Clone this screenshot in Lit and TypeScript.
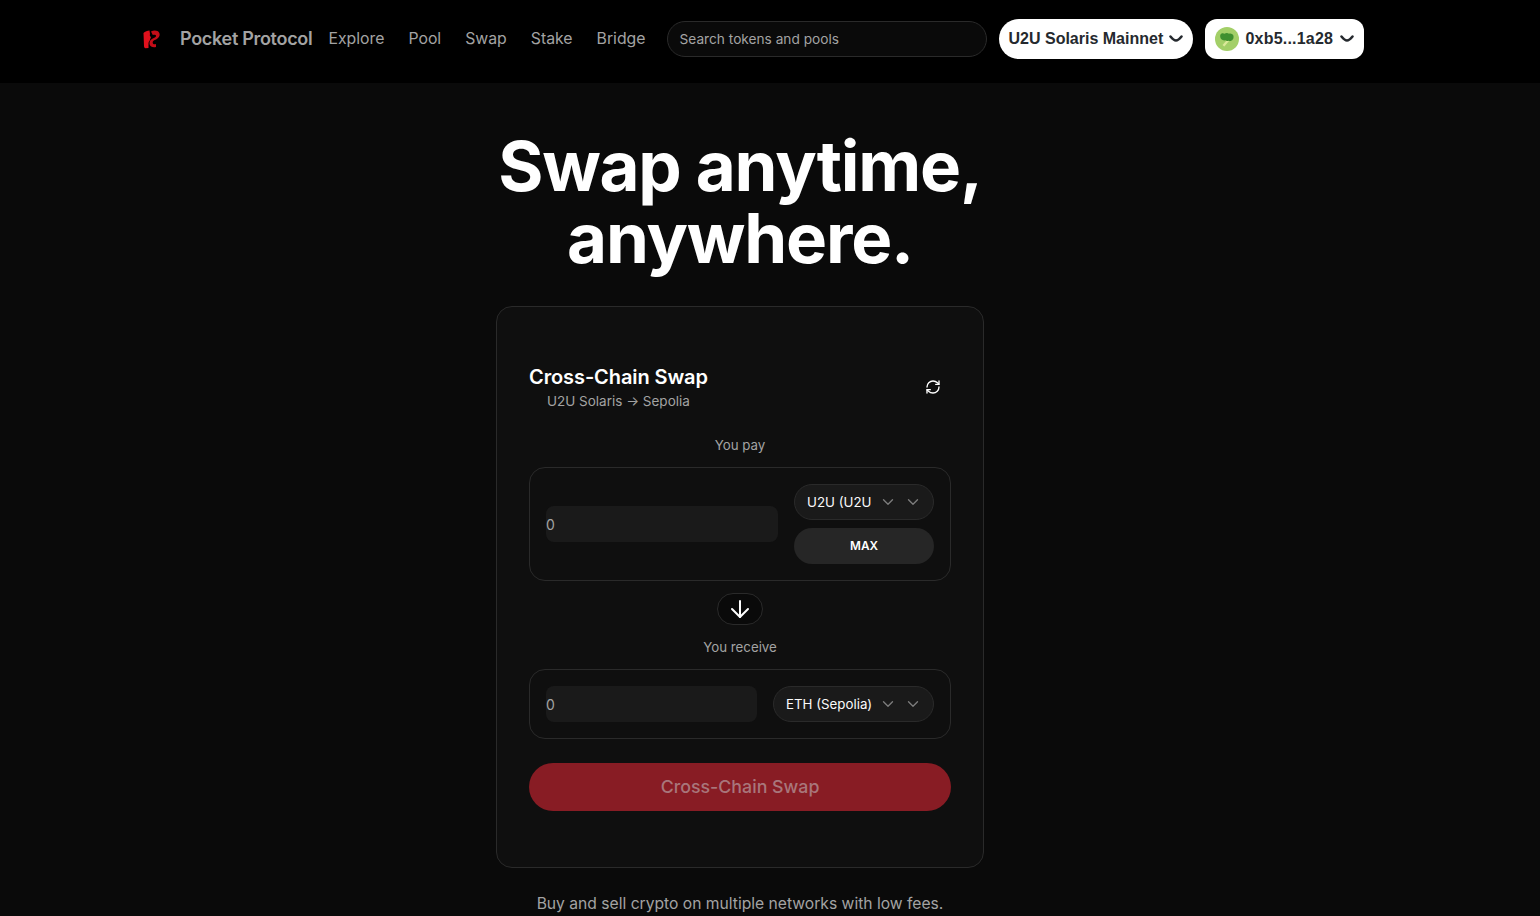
import { LitElement, html, css, svg } from 'lit';
import { customElement } from 'lit/decorators.js';

const chevron = svg`<path d="M6 9l6 6 6-6" fill="none" stroke="currentColor" stroke-width="1.800" stroke-linecap="round" stroke-linejoin="round"/>`;

@customElement('app-root')
export class AppRoot extends LitElement {
  static styles = css`
    :host {
      display: block;
      height: 916px;
      overflow: hidden;
      background: #0a0a0a;
      color: #fff;
      font-family: Inter, "Liberation Sans", sans-serif;
    }
    header {
      height: 83px;
      background: #000;
      display: flex;
      align-items: center;
      padding: 0 0 5px 142px;
      box-sizing: border-box;
    }
    .logo { width: 20px; height: 20px; display: block; }
    .brand {
      margin-left: 18px;
      font-size: 18px;
      line-height: 22px;
      font-weight: 600;
      letter-spacing: -0.3px;
      color: #a3a3a3;
      white-space: nowrap;
    }
    nav { display: flex; gap: 24px; margin: 0 0 1px 16px; }
    nav a { font-size: 15.8px; line-height: 20px; color: #a3a3a3; }
    .search {
      width: 320px;
      height: 36px;
      box-sizing: border-box;
      margin-left: 21px;
      padding-left: 12px;
      border: 1px solid #2a2a2a;
      border-radius: 18px;
      background: #0a0a0a;
      color: #a3a3a3;
      font-size: 13.7px;
      display: flex;
      align-items: center;
    }
    .rk {
      height: 40px;
      box-sizing: border-box;
      background: #fff;
      border-radius: 20px;
      color: #25292e;
      font-family: "Liberation Sans", Arial, sans-serif;
      font-size: 16px;
      font-weight: 700;
      display: flex;
      align-items: center;
      white-space: nowrap;
    }
    .rk svg { width: 14px; height: 8px; display: block; }
    .net { width: 194px; margin-left: 12px; padding-left: 10px; gap: 6px; }
    .acct { width: 159px; margin-left: 12px; padding-left: 10px; border-radius: 12px; gap: 7px; }
    .addr { letter-spacing: 0.2px; }
    .rk .avatar { width: 24px; height: 24px; }
    main {
      display: flex;
      flex-direction: column;
      align-items: center;
      padding-right: 60px;
    }
    h1 {
      margin: 47px 0 32px;
      font-size: 69px;
      line-height: 72px;
      font-weight: 700;
      letter-spacing: -1.200px;
      text-align: center;
    }
    .card {
      width: 488px;
      height: 562px;
      box-sizing: border-box;
      border: 1px solid #2a2a2a;
      border-radius: 16px;
      background: #0f0f0f;
      padding: 56px 32px 0;
    }
    .top { display: flex; align-items: center; justify-content: space-between; }
    .titles { text-align: center; }
    .title { font-size: 20px; line-height: 28px; font-weight: 600; letter-spacing: -0.1px; }
    .sub { font-size: 13.5px; line-height: 20px; color: #a3a3a3; }
    .refresh { width: 16px; height: 16px; margin-right: 10px; display: block; }
    .label { font-size: 13.300px; line-height: 20px; color: #a3a3a3; text-align: center; }
    .pay { margin-top: 24px; }
    .box {
      margin-top: 12px;
      border: 1px solid #2a2a2a;
      border-radius: 16px;
      padding: 16px;
      display: flex;
      align-items: center;
      gap: 16px;
    }
    .amount {
      flex: 1;
      height: 36px;
      border-radius: 8px;
      background: #1a1a1a;
      color: #a3a3a3;
      font-size: 14px;
      line-height: 37px;
    }
    .side { width: 140px; display: flex; flex-direction: column; gap: 8px; }
    .select {
      height: 36px;
      box-sizing: border-box;
      border: 1px solid #2a2a2a;
      border-radius: 18px;
      background: #1a1a1a;
      font-size: 13.300px;
      color: #fafafa;
      display: flex;
      align-items: center;
      padding: 0 11px 0 12px;
      white-space: nowrap;
    }
    .select span { flex: 1; }
    .select svg { width: 18px; height: 18px; color: #7c7c7c; display: block; }
    .select svg + svg { margin-left: 7px; }
    .wide { width: 161px; }
    .max {
      height: 36px;
      border-radius: 18px;
      background: #262626;
      font-size: 11.800px;
      font-weight: 600;
      display: flex;
      align-items: center;
      justify-content: center;
    }
    .flip {
      width: 46px;
      height: 32px;
      box-sizing: border-box;
      margin: 12px auto 0;
      border: 1px solid #2a2a2a;
      border-radius: 16px;
      background: #0a0a0a;
      display: flex;
      align-items: center;
      justify-content: center;
    }
    .flip svg { width: 24px; height: 24px; display: block; }
    .receive { margin-top: 12px; }
    .go {
      margin-top: 24px;
      height: 48px;
      box-sizing: border-box;
      padding-bottom: 1px;
      border-radius: 24px;
      background: #881c24;
      color: #a8767b;
      font-size: 17.800px;
      font-weight: 500;
      display: flex;
      align-items: center;
      justify-content: center;
    }
    .foot { margin-top: 24px; font-size: 15.650px; line-height: 24px; color: #a3a3a3; }
  `;

  render() {
    return html`
      <header>
        <svg class="logo" viewBox="0 0 20 20">
          <path d="M1.500 4c1.500-1.500 4-2.500 6-2.500l.5 3.500c-.5 1.500 0 2.500 1 3l-1.500 4c-.8 .5-1 1.500-1 3V19l-3 .3C2.500 19 2 18 2 17z" fill="#e0101c"/>
          <path d="M9 2.500c3-1.500 7-1.200 8.300 1.500 1.200 3-1 5.500-3.800 6.700-2 .8-3 1.500-2.800 3 .2 1.500 1.800 1.800 3.300 1.300V18c-2.800 .8-6-.2-6.500-3-.4-3 1.500-4.800 4.300-6 1.500-.6 2.500-1.300 2.200-2.500-.3-1-1.800-1-3.200-.4z" fill="#c40d18"/>
        </svg>
        <span class="brand">Pocket Protocol</span>
        <nav>
          <a>Explore</a><a>Pool</a><a>Swap</a><a>Stake</a><a>Bridge</a>
        </nav>
        <div class="search">Search tokens and pools</div>
        <div class="rk net">
          U2U Solaris Mainnet
          <svg viewBox="0 0 14 8"><path d="M1.500 1.500c2 2.500 3.500 4 5.500 4s3.500-1.500 5.500-4" fill="none" stroke="currentColor" stroke-width="2.500" stroke-linecap="round"/></svg>
        </div>
        <div class="rk acct">
          <svg class="avatar" viewBox="0 0 24 24">
            <circle cx="12" cy="12" r="12" fill="#a3cf68"/>
            <path d="M13 12l-5.500 6 1.800 1.500 5.200-6z" fill="#dbe99a"/>
            <path d="M5.500 7.500c1-1.700 3-1.500 4-.8 1.500-1 3.500-.8 4.500 0 1.500-.6 4.500 .3 4.500 2.300 0 1.200 .3 2.500-.8 3.500-.8 1.400-2.500 1.800-4 1.200-1.300 .6-2.500 .3-3.200-.4-1.500 .4-4.500-.3-5-2.300-.3-1.300-.5-2.500 0-3.500z" fill="#3f8f2f"/>
          </svg>
          <span class="addr">0xb5...1a28</span>
          <svg viewBox="0 0 14 8"><path d="M1.500 1.500c2 2.500 3.500 4 5.500 4s3.500-1.500 5.500-4" fill="none" stroke="currentColor" stroke-width="2.500" stroke-linecap="round"/></svg>
        </div>
      </header>
      <main>
        <h1>Swap anytime,<br />anywhere.</h1>
        <section class="card">
          <div class="top">
            <div class="titles">
              <div class="title">Cross-Chain Swap</div>
              <div class="sub">U2U Solaris → Sepolia</div>
            </div>
            <svg class="refresh" viewBox="0 0 24 24" fill="none" stroke="#fff" stroke-width="2" stroke-linecap="round" stroke-linejoin="round">
              <path d="M3 12a9 9 0 0 1 9-9 9.750 9.750 0 0 1 6.740 2.740L21 8"/><path d="M21 3v5h-5"/>
              <path d="M21 12a9 9 0 0 1-9 9 9.750 9.750 0 0 1-6.740-2.740L3 16"/><path d="M8 16H3v5"/>
            </svg>
          </div>
          <div class="label pay">You pay</div>
          <div class="box">
            <div class="amount">0</div>
            <div class="side">
              <div class="select">
                <span>U2U (U2U</span>
                <svg viewBox="0 0 24 24">${chevron}</svg><svg viewBox="0 0 24 24">${chevron}</svg>
              </div>
              <div class="max">MAX</div>
            </div>
          </div>
          <div class="flip">
            <svg viewBox="0 0 24 24" fill="none" stroke="#fff" stroke-width="2" stroke-linecap="round" stroke-linejoin="round">
              <path d="M12 4v16"/><path d="M20 12l-8 8-8-8"/>
            </svg>
          </div>
          <div class="label receive">You receive</div>
          <div class="box">
            <div class="amount">0</div>
            <div class="select wide">
              <span>ETH (Sepolia)</span>
              <svg viewBox="0 0 24 24">${chevron}</svg><svg viewBox="0 0 24 24">${chevron}</svg>
            </div>
          </div>
          <div class="go">Cross-Chain Swap</div>
        </section>
        <div class="foot">Buy and sell crypto on multiple networks with low fees.</div>
      </main>
    `;
  }
}
